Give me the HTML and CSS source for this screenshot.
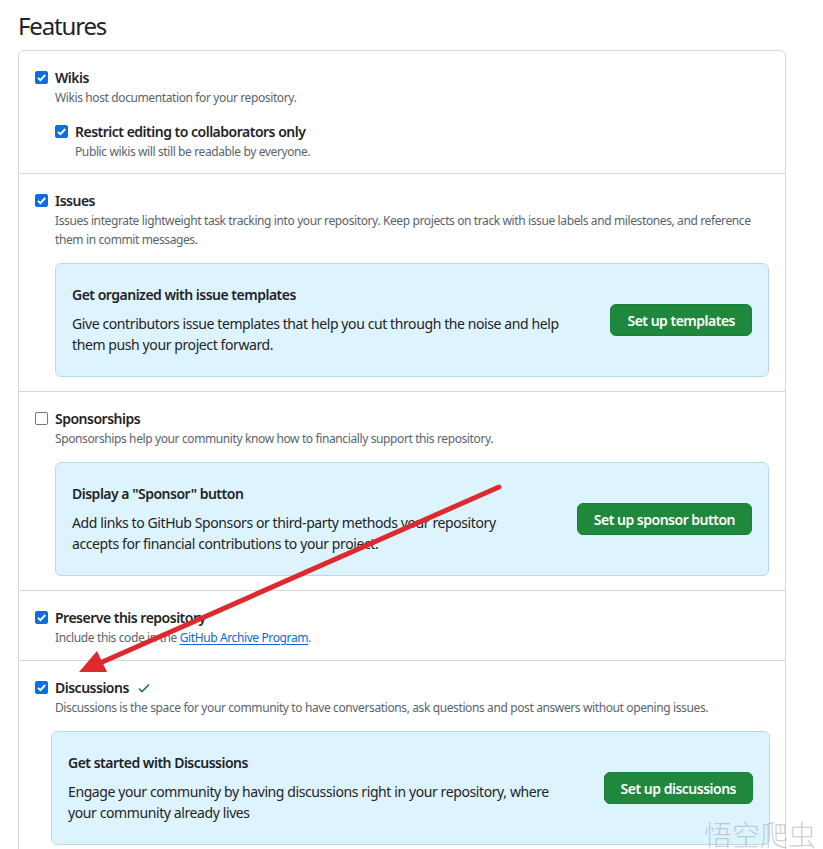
FILE: index.html
```html
<!DOCTYPE html>
<html lang="en">
<head>
<meta charset="utf-8">
<title>Features</title>
<link rel="stylesheet" href="styles.css">
</head>
<body>
<div class="page">
  <h2 class="title">Features</h2>
  <div class="panel">
    <div class="row row-first">
      <div class="field">
        <span class="cb on"><svg viewBox="0 0 13 13"><path d="M3 6.8l2.4 2.4L10.2 4" /></svg></span>
        <div class="field-body">
          <div class="label">Wikis</div>
          <div class="desc">Wikis host documentation for your repository.</div>
          <div class="field sub">
            <span class="cb on"><svg viewBox="0 0 13 13"><path d="M3 6.8l2.4 2.4L10.2 4" /></svg></span>
            <div class="field-body">
              <div class="label">Restrict editing to collaborators only</div>
              <div class="desc">Public wikis will still be readable by everyone.</div>
            </div>
          </div>
        </div>
      </div>
    </div>

    <div class="row row-box">
      <div class="field">
        <span class="cb on"><svg viewBox="0 0 13 13"><path d="M3 6.8l2.4 2.4L10.2 4" /></svg></span>
        <div class="field-body">
          <div class="label">Issues</div>
          <div class="desc">Issues integrate lightweight task tracking into your repository. Keep projects on track with issue labels and milestones, and reference them in commit messages.</div>
          <div class="promo">
            <div class="promo-text">
              <div class="promo-title">Get organized with issue templates</div>
              <div class="promo-body">Give contributors issue templates that help you cut through the noise and help them push your project forward.</div>
            </div>
            <button class="btn">Set up templates</button>
          </div>
        </div>
      </div>
    </div>

    <div class="row row-box">
      <div class="field">
        <span class="cb"></span>
        <div class="field-body">
          <div class="label">Sponsorships</div>
          <div class="desc">Sponsorships help your community know how to financially support this repository.</div>
          <div class="promo">
            <div class="promo-text">
              <div class="promo-title">Display a "Sponsor" button</div>
              <div class="promo-body">Add links to GitHub Sponsors or third-party methods your repository accepts for financial contributions to your project.</div>
            </div>
            <button class="btn">Set up sponsor button</button>
          </div>
        </div>
      </div>
    </div>

    <div class="row">
      <div class="field">
        <span class="cb on"><svg viewBox="0 0 13 13"><path d="M3 6.8l2.4 2.4L10.2 4" /></svg></span>
        <div class="field-body">
          <div class="label">Preserve this repository</div>
          <div class="desc">Include this code in the <a class="link" href="#">GitHub Archive Program</a>.</div>
        </div>
      </div>
    </div>

    <div class="row row-box">
      <div class="field">
        <span class="cb on"><svg viewBox="0 0 13 13"><path d="M3 6.8l2.4 2.4L10.2 4" /></svg></span>
        <div class="field-body">
          <div class="label">Discussions <svg class="ok" viewBox="0 0 16 16"><path d="M3 8.5l3 3L13 4.5" /></svg></div>
          <div class="desc">Discussions is the space for your community to have conversations, ask questions and post answers without opening issues.</div>
        </div>
      </div>
      <div class="promo promo-wide">
        <div class="promo-text">
          <div class="promo-title">Get started with Discussions</div>
          <div class="promo-body">Engage your community by having discussions right in your repository, where your community already lives</div>
        </div>
        <button class="btn">Set up discussions</button>
      </div>
    </div>
  </div>
</div>

<svg class="arrow" viewBox="0 0 823 849" width="823" height="849">
  <line x1="499" y1="487" x2="100" y2="663" />
  <polygon points="79,672 97,651 107,672" />
</svg>
<div class="watermark">悟空爬虫</div>
</body>
</html>
```

FILE: styles.css
```css
html, body {
  margin: 0;
  padding: 0;
  background: #ffffff;
  overflow: hidden;
}
body {
  font-family: "Noto Sans", "Liberation Sans", sans-serif;
  letter-spacing: -0.5px;
  color: #1f2328;
  width: 823px;
  height: 849px;
  position: relative;
}
.page {
  padding: 8px 37px 0 18px;
}
.title {
  margin: 0 0 6px 0;
  font-size: 24px;
  font-weight: 400;
  line-height: 36px;
  letter-spacing: -1.15px;
}
.panel {
  border: 1px solid #d1d9e0;
  border-radius: 6px;
}
.row {
  padding: 17px 16px 13px 16px;
  border-top: 1px solid #d1d9e0;
}
.row-first {
  border-top: none;
  padding-bottom: 12px;
}
.row-box {
  padding-bottom: 14px;
}
.field {
  display: flex;
  gap: 7px;
  align-items: flex-start;
}
.field-body {
  flex: 1;
  min-width: 0;
}
.sub {
  margin-top: 15px;
}
.cb {
  flex: none;
  width: 13px;
  height: 13px;
  margin-top: 3px;
  box-sizing: border-box;
  border: 1px solid #767676;
  border-radius: 2px;
  background: #fff;
  display: flex;
}
.cb.on {
  background: #0b6fe0;
  border-color: #0b6fe0;
}
.cb svg {
  width: 13px;
  height: 13px;
  margin: -1px;
  fill: none;
  stroke: #fff;
  stroke-width: 1.9;
}
.label {
  font-size: 14px;
  font-weight: 600;
  line-height: 20px;
  display: flex;
  align-items: center;
}
.ok {
  width: 16px;
  height: 16px;
  margin-left: 7px;
  fill: none;
  stroke: #1a7f37;
  stroke-width: 1.6;
}
.desc {
  font-size: 12px;
  line-height: 19px;
  color: #59636e;
  letter-spacing: -0.386px;
}
.link {
  color: #0969da;
  text-decoration: underline;
  text-underline-offset: 2px;
}
.promo {
  margin-top: 14px;
  display: flex;
  align-items: center;
  gap: 34px;
  background: #ddf4ff;
  border: 1px solid #b6dcec;
  border-radius: 6px;
  padding: 21px 16px 21px 16px;
}
.promo-wide {
  margin: 14px -1px 0 16px;
}
.promo-text {
  flex: 1;
  min-width: 0;
}
.promo-title {
  font-size: 14px;
  font-weight: 600;
  line-height: 20px;
  margin-bottom: 8px;
}
.promo-body {
  font-size: 14px;
  line-height: 21px;
  letter-spacing: -0.4px;
}
.btn {
  flex: none;
  font-family: inherit;
  letter-spacing: inherit;
  font-size: 14px;
  font-weight: 600;
  color: #fff;
  background: #1f883d;
  border: 1px solid #1a7f37;
  border-radius: 6px;
  height: 32px;
  padding: 0 16px;
  cursor: pointer;
}
.arrow {
  position: absolute;
  left: 0;
  top: 0;
  pointer-events: none;
}
.arrow line {
  stroke: #dc2a2e;
  stroke-width: 5;
  stroke-linecap: round;
}
.arrow polygon {
  fill: #dc2a2e;
}
.watermark {
  position: absolute;
  left: 704px;
  top: 820px;
  font-family: "Noto Sans CJK SC", sans-serif;
  font-weight: 300;
  font-size: 28px;
  line-height: 28px;
  letter-spacing: 0;
  color: rgba(150, 150, 150, 0.45);
  white-space: nowrap;
}
```
